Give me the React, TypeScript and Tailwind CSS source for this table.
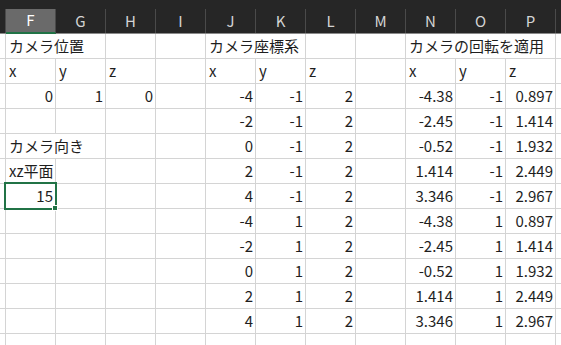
import React from 'react';

type Cell = string | number | null;

const columns = ['F', 'G', 'H', 'I', 'J', 'K', 'L', 'M', 'N', 'O', 'P', ''];

// 12 columns: F..Q
const rows: Cell[][] = [
  ['カメラ位置', null, null, null, 'カメラ座標系', null, null, null, 'カメラの回転を適用', null, null, null],
  ['x', 'y', 'z', null, 'x', 'y', 'z', null, 'x', 'y', 'z', null],
  [0, 1, 0, null, -4, -1, 2, null, -4.38, -1, 0.897, null],
  [null, null, null, null, -2, -1, 2, null, -2.45, -1, 1.414, null],
  ['カメラ向き', null, null, null, 0, -1, 2, null, -0.52, -1, 1.932, null],
  ['xz平面', null, null, null, 2, -1, 2, null, 1.414, -1, 2.449, null],
  [15, null, null, null, 4, -1, 2, null, 3.346, -1, 2.967, null],
  [null, null, null, null, -4, 1, 2, null, -4.38, 1, 0.897, null],
  [null, null, null, null, -2, 1, 2, null, -2.45, 1, 1.414, null],
  [null, null, null, null, 0, 1, 2, null, -0.52, 1, 1.932, null],
  [null, null, null, null, 2, 1, 2, null, 1.414, 1, 2.449, null],
  [null, null, null, null, 4, 1, 2, null, 3.346, 1, 2.967, null],
  [null, null, null, null, null, null, null, null, null, null, null, null],
];

// cells whose text spills into the next column, so the gridline is hidden
const spills: Record<number, number[]> = {
  0: [0, 4, 8, 9],
  4: [0],
};

const App: React.FC = () => {
  return (
    <div
      className="relative w-[561px] h-[345px] overflow-hidden bg-white"
      style={{ fontFamily: '"Noto Sans CJK JP", "Noto Sans", sans-serif' }}
    >
      {/* Column headers */}
      <div className="flex items-end h-[34px] bg-[#262626] border-b border-[#8a8a8a]">
        <div className="w-[6px] shrink-0 h-[24px] border-r border-[#4a4a4a]" />
        {columns.map((col, i) => (
          <div
            key={i}
            className={`w-[50px] shrink-0 h-[24px] flex items-center justify-center text-[15px] border-r border-[#4a4a4a] ${
              i === 0
                ? 'bg-[#6a6a6a] text-white border-b-2 border-b-[#217346] -mb-px h-[25px]'
                : 'text-[#d4d4d4]'
            }`}
          >
            {col}
          </div>
        ))}
      </div>

      {/* Grid */}
      {rows.map((row, r) => (
        <div key={r} className="flex h-[25px] border-b border-[#d4d4d4]">
          <div className="w-[6px] shrink-0 border-r border-[#d4d4d4]" />
          {row.map((cell, c) => {
            const spill = spills[r]?.includes(c);
            const isNum = typeof cell === 'number';
            return (
              <div
                key={c}
                className={`w-[50px] shrink-0 flex items-center text-[15px] text-[#1e1e1e] whitespace-nowrap ${
                  spill ? 'border-r border-transparent' : 'border-r border-[#d4d4d4]'
                } ${isNum ? 'justify-end pr-[2px]' : 'justify-start pl-[3px]'}`}
              >
                {cell !== null && <span className={spill ? 'relative z-10' : ''}>{cell}</span>}
              </div>
            );
          })}
        </div>
      ))}

      {/* Active cell F7 */}
      <div className="absolute left-[4px] top-[182px] w-[53px] h-[28px] border-2 border-[#217346] pointer-events-none" />
      <div className="absolute left-[52px] top-[205px] w-[6px] h-[6px] bg-[#217346] border border-white" />
    </div>
  );
};

export default App;
